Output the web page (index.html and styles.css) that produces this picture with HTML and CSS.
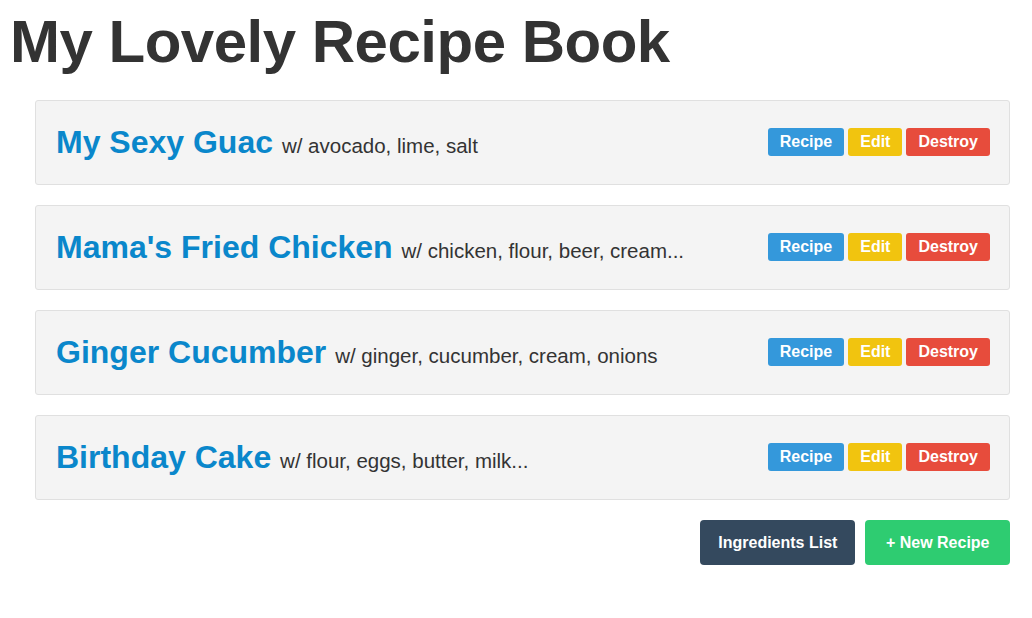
FILE: index.html
```html
<!DOCTYPE html>
<html>
<head>
<meta charset="utf-8">
<link rel="stylesheet" href="styles.css">
</head>
<body>
<h1 class="page-title">My Lovely Recipe Book</h1>
<div class="list">
  <div class="well">
    <h2 class="recipe-title"><span class="recipe-name">My Sexy Guac</span> <small class="recipe-ing">w/ avocado, lime, salt</small></h2>
    <div class="actions"><span class="btn btn-blue">Recipe</span><span class="btn btn-yellow">Edit</span><span class="btn btn-red">Destroy</span></div>
  </div>
  <div class="well">
    <h2 class="recipe-title"><span class="recipe-name">Mama's Fried Chicken</span> <small class="recipe-ing">w/ chicken, flour, beer, cream...</small></h2>
    <div class="actions"><span class="btn btn-blue">Recipe</span><span class="btn btn-yellow">Edit</span><span class="btn btn-red">Destroy</span></div>
  </div>
  <div class="well">
    <h2 class="recipe-title"><span class="recipe-name">Ginger Cucumber</span> <small class="recipe-ing">w/ ginger, cucumber, cream, onions</small></h2>
    <div class="actions"><span class="btn btn-blue">Recipe</span><span class="btn btn-yellow">Edit</span><span class="btn btn-red">Destroy</span></div>
  </div>
  <div class="well">
    <h2 class="recipe-title"><span class="recipe-name">Birthday Cake</span> <small class="recipe-ing">w/ flour, eggs, butter, milk...</small></h2>
    <div class="actions"><span class="btn btn-blue">Recipe</span><span class="btn btn-yellow">Edit</span><span class="btn btn-red">Destroy</span></div>
  </div>
  <div class="footer-actions">
    <span class="btn-lg btn-navy">Ingredients List</span>
    <span class="btn-lg btn-green">+ New Recipe</span>
  </div>
</div>
</body>
</html>
```
FILE: styles.css
```css
html, body {
  margin: 0;
  padding: 0;
  background: #fff;
  font-family: "Liberation Sans", Arial, sans-serif;
  color: #333;
}
.page-title {
  margin: 0;
  padding: 9px 0 0 10px;
  font-size: 60px;
  line-height: 66px;
  font-weight: bold;
  color: #333;
  letter-spacing: -0.5px;
}
.list {
  margin: 25px 22px 0 35px;
}
.well {
  display: flex;
  align-items: center;
  justify-content: space-between;
  height: 85px;
  box-sizing: border-box;
  padding: 0 19px 0 20px;
  margin-bottom: 20px;
  background: #f4f4f4;
  border: 1px solid #e0e0e0;
  border-radius: 3px;
}
.recipe-title {
  margin: 0;
  font-size: 32px;
  font-weight: bold;
  line-height: 38px;
  padding-top: 2px;
}
.recipe-name {
  color: #0a87cb;
}
.recipe-ing {
  font-size: 20.5px;
  font-weight: normal;
  color: #333;
}
.actions {
  display: flex;
  gap: 4px;
  margin-top: -1px;
}
.btn {
  display: inline-block;
  height: 28px;
  line-height: 28px;
  padding: 0 12px;
  border-radius: 3px;
  color: #fff;
  font-size: 16px;
  font-weight: bold;
}
.btn-blue { background: #3498db; }
.btn-yellow { background: #f1c40f; }
.btn-red { background: #e74c3c; }
.footer-actions {
  display: flex;
  justify-content: flex-end;
  gap: 10px;
}
.btn-lg {
  display: inline-block;
  height: 45px;
  line-height: 45px;
  padding: 0 18px;
  border-radius: 4px;
  color: #fff;
  font-size: 16px;
  font-weight: bold;
}
.btn-navy { background: #34495e; }
.btn-green { background: #2ecc71; padding: 0 20.5px; }
```
